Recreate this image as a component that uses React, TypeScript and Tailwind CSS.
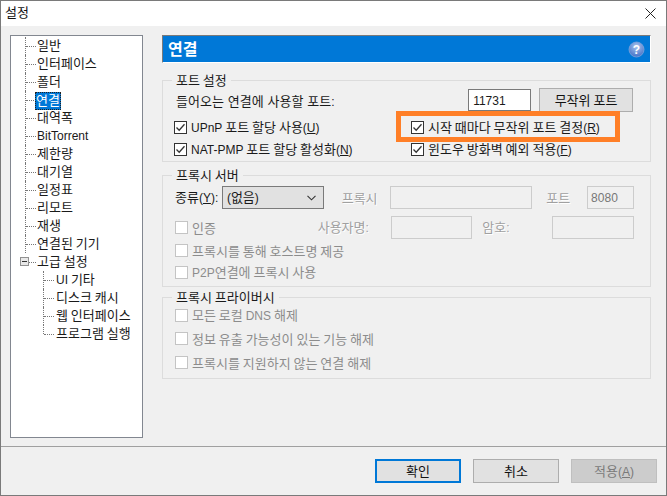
const font = { fontFamily: '"Noto Sans CJK KR", "Noto Sans", sans-serif' };

function Tx({ s }: { s: string }) {
  const parts = s.split(/([A-Za-z0-9().:_-]+)/);
  return (
    <>
      {parts.map((p, i) => {
        if (i % 2 === 0) return <span key={i}>{p}</span>;
        const m = p.indexOf("_");
        return (
          <span key={i} className="text-[12px] font-['Liberation_Sans',sans-serif]">
            {m < 0 ? (
              p
            ) : (
              <>
                {p.slice(0, m)}
                <u>{p.charAt(m + 1)}</u>
                {p.slice(m + 2)}
              </>
            )}
          </span>
        );
      })}
    </>
  );
}

function Check({ checked = false, disabled = false }: { checked?: boolean; disabled?: boolean }) {
  return (
    <span
      className={
        "w-[13px] h-[13px] shrink-0 border flex items-center justify-center " +
        (disabled ? "border-[#c4c4c4] bg-white" : "border-[#333333] bg-white")
      }
    >
      {checked && (
        <svg width="11" height="11" viewBox="0 0 11 11" fill="none">
          <path d="M1.5 5.5 L4.2 8.3 L9.5 2.2" stroke="#333333" strokeWidth="1.3" />
        </svg>
      )}
    </span>
  );
}

function CheckRow({ label, checked = false, disabled = false, w = "" }: { label: string; checked?: boolean; disabled?: boolean; w?: string }) {
  return (
    <div className={"flex items-center gap-[4px] h-[21px] " + w}>
      <Check checked={checked} disabled={disabled} />
      <span className={"whitespace-nowrap " + (disabled ? "text-[#8c8c8c]" : "text-[#1a1a1a]")}>
        <Tx s={label} />
      </span>
    </div>
  );
}

function Group({ title, className, children }: { title: string; className: string; children: React.ReactNode }) {
  return (
    <div className={"relative border border-[#dcdcdc] " + className}>
      <span className="absolute left-[9px] top-[-9px] bg-[#f0f0f0] px-[4px] leading-[16px] text-[#1a1a1a]">{title}</span>
      {children}
    </div>
  );
}

function Field({ w, value }: { w: string; value?: string }) {
  return (
    <div className={"h-[23px] border border-[#cccccc] text-[#777777] pl-[3px] leading-[20px] " + w}>
      {value && <Tx s={value} />}
    </div>
  );
}

function Button({ label, primary, disabled, w = "w-[86px]" }: { label: string; primary?: boolean; disabled?: boolean; w?: string }) {
  return (
    <div
      className={
        "h-[24px] flex items-center justify-center " + w + " " +
        (primary
          ? "border-2 border-[#0078d7] bg-[#e1e1e1] text-[#111111]"
          : disabled
          ? "border border-[#bfbfbf] bg-[#cccccc] text-[#7a7a7a]"
          : "border border-[#adadad] bg-[#e1e1e1] text-[#111111]")
      }
    >
      <span><Tx s={label} /></span>
    </div>
  );
}

const top = ["일반", "인터페이스", "폴더", "연결", "대역폭", "BitTorrent", "제한량", "대기열", "일정표", "리모트", "재생", "연결된 기기"];
const kids = ["UI 기타", "디스크 캐시", "웹 인터페이스", "프로그램 실행"];

function Tree() {
  return (
    <div className="w-[133px] h-[403px] shrink-0 border border-[#828790] bg-white pt-[1px] text-[#1a1a1a]">
      <div className="ml-[14px]">
        {top.map((t) => (
          <div key={t} className="h-[18px] flex items-center border-l border-dotted border-[#777777]">
            <span className="w-[10px] border-t border-dotted border-[#777777]" />
            {t === "연결" ? (
              <span className="ml-[-1px] mt-[1px] h-[18px] bg-[#0078d7] text-white border border-dotted border-[#222222] flex items-center"><span className="mb-[2px]">{t}</span></span>
            ) : (
              <span className="ml-[1px] mb-[2px]"><Tx s={t} /></span>
            )}
          </div>
        ))}
        <div className="relative h-[18px] flex items-center">
          <span className="absolute left-[-5px] top-[4px] w-[9px] h-[9px] border border-[#919191] bg-[#e8e8e8] flex items-center justify-center">
            <span className="w-[5px] h-px bg-[#333333]" />
          </span>
          <span className="w-[11px] border-t border-dotted border-[#777777] shrink-0" />
          <span className="ml-[1px] mb-[2px]">고급 설정</span>
        </div>
        <div className="ml-[18px]">
          {kids.map((k, i) => (
            <div key={k} className={"relative h-[18px] flex items-center " + (i === kids.length - 1 ? "pl-px" : "border-l border-dotted border-[#777777]")}>
              {i === kids.length - 1 && <span className="absolute left-0 top-0 h-[9px] border-l border-dotted border-[#777777]" />}
              <span className="w-[10px] border-t border-dotted border-[#777777]" />
              <span className="ml-[2px] mb-[2px]"><Tx s={k} /></span>
            </div>
          ))}
        </div>
      </div>
    </div>
  );
}

const faint = "text-[#a0a0a0] [text-shadow:1px_1px_0_#ffffff]";

export default function App() {
  return (
    <div className="relative w-[667px] h-[496px] overflow-hidden border border-[#7a7a7a] bg-[#f0f0f0] flex flex-col text-[13px] leading-[16px]" style={font}>
      <div className="h-[25px] shrink-0 bg-white flex items-center justify-between pl-[4px] pr-[10px] text-[#111111]">
        <span className="mb-[3px]">설정</span>
        <svg width="11" height="11" viewBox="0 0 11 11" fill="none">
          <path d="M0.5 0.5 L10.5 10.5 M10.5 0.5 L0.5 10.5" stroke="#222222" strokeWidth="1" />
        </svg>
      </div>
      <div className="flex-1 flex pl-[9px] pt-[9px] border-b border-[#a0a0a0]">
        <Tree />
        <div className="ml-[19px] w-[489px] flex flex-col">
          <div className="h-[28px] shrink-0 bg-[#0078d7] border-t border-l border-t-[#7a7a7a] border-l-[#7a7a7a] border-r border-b border-r-white border-b-white flex items-center justify-between pl-[5px] pr-[5px]">
            <span className="text-white text-[16px] font-bold mb-[2px]">연결</span>
            <svg width="17" height="17" viewBox="0 0 17 17">
              <defs>
                <radialGradient id="h" cx="50%" cy="30%" r="75%">
                  <stop offset="0%" stopColor="#a9c4ee" />
                  <stop offset="100%" stopColor="#3f6cc4" />
                </radialGradient>
              </defs>
              <circle cx="8.5" cy="8.5" r="7.5" fill="url(#h)" stroke="#7fa4dc" strokeWidth="0.8" />
              <text x="8.5" y="13" textAnchor="middle" fontSize="12" fontWeight="700" fill="#ffffff" fontFamily="Liberation Sans">?</text>
            </svg>
          </div>

          <Group title="포트 설정" className="mt-[17px] h-[82px] pt-[8px] pl-[11px] pr-[17px]">
            <div className="h-[22px] flex items-center">
              <span className="pl-[2px] mt-[2px] text-[#1a1a1a] w-[295px] [word-spacing:1px]"><Tx s="들어오는 연결에 사용할 포트:" /></span>
              <div className="w-[63px] h-[22px] border border-[#7a7a7a] bg-white pl-[4px] text-[#1a1a1a] leading-[20px]"><Tx s="11731" /></div>
              <div className="ml-[8px]"><Button label="무작위 포트" w="w-[94px]" /></div>
            </div>
            <div className="mt-[6px] flex">
              <CheckRow w="w-[237px]" checked label="UPnP 포트 할당 사용(_U)" />
              <CheckRow checked label="시작 때마다 무작위 포트 결정(_R)" />
            </div>
            <div className="mt-[1px] flex">
              <CheckRow w="w-[237px]" checked label="NAT-PMP 포트 할당 활성화(_N)" />
              <CheckRow checked label="윈도우 방화벽 예외 적용(_F)" />
            </div>
          </Group>

          <Group title="프록시 서버" className="mt-[13px] h-[112px] pt-[10px] pl-[12px] pr-[16px]">
            <div className="flex items-center h-[23px]">
              <span className="w-[47px] text-[#1a1a1a] whitespace-nowrap"><Tx s="종류(_Y):" /></span>
              <div className="w-[102px] h-[23px] border border-[#7a7a7a] bg-[#e1e1e1] flex items-center justify-between pl-[4px] pr-[7px] text-[#1a1a1a]">
                <span><Tx s="(없음)" /></span>
                <svg width="9" height="6" viewBox="0 0 9 6" fill="none"><path d="M0.5 0.8 L4.5 4.8 L8.5 0.8" stroke="#333333" strokeWidth="1.1" /></svg>
              </div>
              <span className={"ml-[18px] w-[48px] " + faint}>프록시</span>
              <Field w="w-[143px]" />
              <span className={"ml-[14px] w-[41px] " + faint}>포트</span>
              <Field w="w-[47px]" value="8080" />
            </div>
            <div className="mt-[7px] flex items-center h-[23px]">
              <div className="w-[143px]"><CheckRow disabled label="인증" /></div>
              <span className={"w-[73px] whitespace-nowrap " + faint}><Tx s="사용자명:" /></span>
              <Field w="w-[82px]" />
              <span className={"ml-[10px] w-[70px] " + faint}><Tx s="암호:" /></span>
              <Field w="w-[82px]" />
            </div>
            <div className="mt-[1px]"><CheckRow disabled label="프록시를 통해 호스트명 제공" /></div>
            <div className="mt-[1px]"><CheckRow disabled label="P2P연결에 프록시 사용" /></div>
          </Group>

          <Group title="프록시 프라이버시" className="mt-[10px] h-[82px] pt-[7px] pl-[12px]">
            <CheckRow disabled label="모든 로컬 DNS 해제" />
            <div className="mt-[2px]"><CheckRow disabled label="정보 유출 가능성이 있는 기능 해제" /></div>
            <div className="mt-[3px]"><CheckRow disabled label="프록시를 지원하지 않는 연결 해제" /></div>
          </Group>
        </div>
      </div>
      <div className="h-[48px] shrink-0 flex items-center justify-end gap-[12px] pr-[9px]">
        <Button primary label="확인" />
        <Button label="취소" />
        <Button disabled label="적용(_A)" />
      </div>
      <div className="absolute left-[395px] top-[110px] w-[224px] h-[31px] border-[5px] border-[#ff7f27]" />
    </div>
  );
}
